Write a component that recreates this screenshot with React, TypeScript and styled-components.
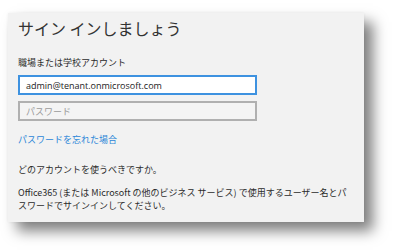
import React from "react";
import styled, { createGlobalStyle } from "styled-components";

const Global = createGlobalStyle`
  html, body { margin: 0; padding: 0; background: #ffffff; }
  body { width: 397px; height: 251px; overflow: hidden; }
`;

const Page = styled.div`
  padding: 13px 0 0 8px;
  font-family: "Noto Sans CJK JP", "Noto Sans", sans-serif;
`;

const Panel = styled.div`
  width: 356px;
  height: 209px;
  box-sizing: border-box;
  background: #f2f2f2;
  padding: 3px 10px 0 10px;
  box-shadow: 9px 9px 13px rgba(0, 0, 0, 0.5), 0 0 3px rgba(0, 0, 0, 0.06);
  color: #2b2b2b;
  display: flex;
  flex-direction: column;
`;

const Title = styled.h1`
  margin: 0;
  font-size: 16px;
  font-weight: 400;
  line-height: 24px;
  color: #333;
`;

const Label = styled.div`
  margin-top: 16px;
  font-size: 9px;
  line-height: 13px;
`;

const Input = styled.div<{ $active?: boolean }>`
  box-sizing: border-box;
  width: 239px;
  height: 20px;
  margin-top: 6px;
  padding: 0 6px;
  display: flex;
  align-items: center;
  font-family: "Open Sans", "Noto Sans CJK JP", sans-serif;
  font-size: 9px;
  border: 2px solid ${(p) => (p.$active ? "#3e92e0" : "#b0b0b0")};
  background: ${(p) => (p.$active ? "#ffffff" : "#f4f4f4")};
  color: ${(p) => (p.$active ? "#222" : "#9a9a9a")};
`;

const Link = styled.div`
  margin-top: 12px;
  font-size: 9px;
  line-height: 13px;
  color: #2b86d8;
`;

const Question = styled.div`
  margin-top: 17px;
  font-size: 9px;
  line-height: 13px;
`;

const Body = styled.p`
  margin: 10px 0 0;
  font-size: 9px;
  line-height: 13px;
`;

export default function App() {
  return (
    <>
      <Global />
      <Page>
        <Panel>
          <Title>サイン インしましょう</Title>
          <Label>職場または学校アカウント</Label>
          <Input $active>admin@tenant.onmicrosoft.com</Input>
          <Input>パスワード</Input>
          <Link>パスワードを忘れた場合</Link>
          <Question>どのアカウントを使うべきですか。</Question>
          <Body>
            Office365 (または Microsoft の他のビジネス サービス) で使用するユーザー名とパスワードでサインインしてください。
          </Body>
        </Panel>
      </Page>
    </>
  );
}
